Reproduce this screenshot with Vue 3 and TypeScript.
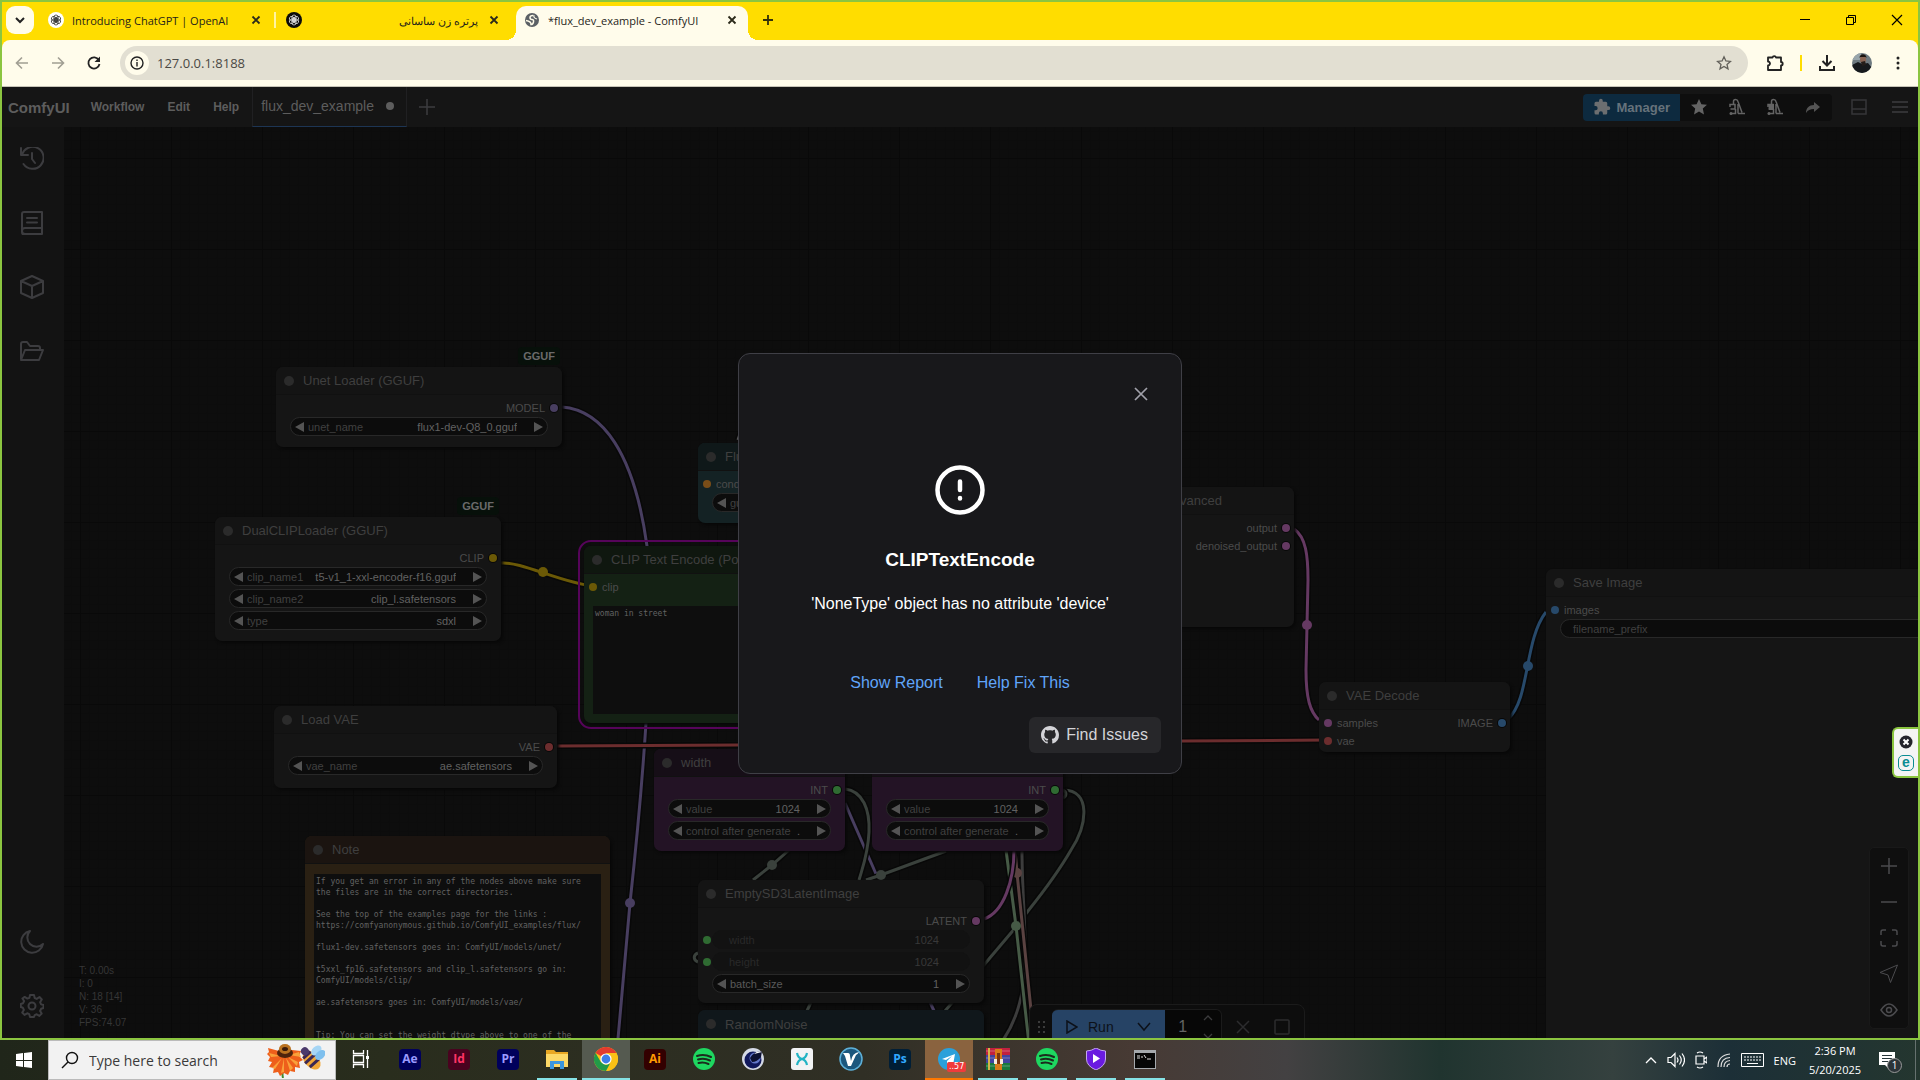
<script setup lang="ts">
import { ref } from 'vue'

interface Slot { name: string; color: string }
interface Widget { kind: 'combo' | 'text' | 'off'; label: string; value: string; bright?: boolean }
interface GraphNode {
  id: string
  x: number
  y: number
  w: number
  h: number
  title: string
  tone: string
  badge?: string
  selected?: boolean
  inputs?: Slot[]
  outputs?: Slot[]
  widgets?: Widget[]
  note?: string
}
interface Link { d: string; color: string; dot?: [number, number] }

const purple = '#483e60'
const yellow = '#6b5906'
const red = '#6c2d2e'
const pink = '#653962'
const blue = '#27496a'
const green = '#2f6b32'
const moss = '#3a413c'

const noteText = `If you get an error in any of the nodes above make sure
the files are in the correct directories.

See the top of the examples page for the links :
https://comfyanonymous.github.io/ComfyUI_examples/flux/

flux1-dev.safetensors goes in: ComfyUI/models/unet/

t5xxl_fp16.safetensors and clip_l.safetensors go in:
ComfyUI/models/clip/

ae.safetensors goes in: ComfyUI/models/vae/


Tip: You can set the weight dtype above to one of the
fp8 types if you have memory issues.`

const nodes = ref<GraphNode[]>([
  { id: 'unet', x: 276, y: 367, w: 286, h: 80, title: 'Unet Loader (GGUF)', tone: 'plain', badge: 'GGUF',
    outputs: [{ name: 'MODEL', color: purple }],
    widgets: [{ kind: 'combo', label: 'unet_name', value: 'flux1-dev-Q8_0.gguf' }] },
  { id: 'dual', x: 215, y: 517, w: 286, h: 124, title: 'DualCLIPLoader (GGUF)', tone: 'plain', badge: 'GGUF',
    outputs: [{ name: 'CLIP', color: yellow }],
    widgets: [
      { kind: 'combo', label: 'clip_name1', value: 't5-v1_1-xxl-encoder-f16.gguf' },
      { kind: 'combo', label: 'clip_name2', value: 'clip_l.safetensors' },
      { kind: 'combo', label: 'type', value: 'sdxl' },
    ] },
  { id: 'vae', x: 274, y: 706, w: 283, h: 82, title: 'Load VAE', tone: 'plain',
    outputs: [{ name: 'VAE', color: red }],
    widgets: [{ kind: 'combo', label: 'vae_name', value: 'ae.safetensors' }] },
  { id: 'flux', x: 698, y: 443, w: 286, h: 80, title: 'FluxGuidance', tone: 'teal',
    inputs: [{ name: 'conditioning', color: '#7a4d18' }],
    widgets: [{ kind: 'combo', label: 'guidance', value: '3.5' }] },
  { id: 'encode', x: 584, y: 546, w: 386, h: 177, title: 'CLIP Text Encode (Positive Prompt)', tone: 'green', selected: true,
    inputs: [{ name: 'clip', color: yellow }],
    note: 'woman in street' },
  { id: 'sampler', x: 1044, y: 487, w: 250, h: 140, title: 'SamplerCustomAdvanced', tone: 'plain',
    outputs: [{ name: 'output', color: pink }, { name: 'denoised_output', color: pink }] },
  { id: 'decode', x: 1319, y: 682, w: 191, h: 70, title: 'VAE Decode', tone: 'plain',
    inputs: [{ name: 'samples', color: pink }, { name: 'vae', color: red }],
    outputs: [{ name: 'IMAGE', color: blue }] },
  { id: 'save', x: 1546, y: 569, w: 560, h: 530, title: 'Save Image', tone: 'plain',
    inputs: [{ name: 'images', color: blue }],
    widgets: [{ kind: 'text', label: 'filename_prefix', value: '' }] },
  { id: 'note', x: 305, y: 836, w: 305, h: 300, title: 'Note', tone: 'brown', note: noteText },
  { id: 'width', x: 654, y: 749, w: 191, h: 102, title: 'width', tone: 'plum',
    outputs: [{ name: 'INT', color: green }],
    widgets: [
      { kind: 'combo', label: 'value', value: '1024' },
      { kind: 'combo', label: 'control after generate', value: '.' },
    ] },
  { id: 'height', x: 872, y: 749, w: 191, h: 102, title: 'height', tone: 'plum',
    outputs: [{ name: 'INT', color: green }],
    widgets: [
      { kind: 'combo', label: 'value', value: '1024' },
      { kind: 'combo', label: 'control after generate', value: '.' },
    ] },
  { id: 'latent', x: 698, y: 880, w: 286, h: 123, title: 'EmptySD3LatentImage', tone: 'plain',
    outputs: [{ name: 'LATENT', color: pink }],
    widgets: [
      { kind: 'off', label: 'width', value: '1024' },
      { kind: 'off', label: 'height', value: '1024' },
      { kind: 'combo', label: 'batch_size', value: '1', bright: true },
    ] },
  { id: 'noise', x: 698, y: 1010, w: 286, h: 100, title: 'RandomNoise', tone: 'navy' },
])

const links: Link[] = [
  { d: 'M562 407C602 410 634 452 647 546C655 610 650 670 646 723C643 770 638 830 630 903L617 1050', color: purple, dot: [630, 903] },
  { d: 'M501 563C520 561 562 583 593 586', color: yellow, dot: [543, 572] },
  { d: 'M557 746L738 745L1182 741L1328 740', color: red },
  { d: 'M1294 529C1306 537 1308 556 1308 580L1306 670C1306 698 1310 712 1319 720', color: pink, dot: [1307, 625] },
  { d: 'M1508 719C1530 700 1524 640 1546 612', color: blue, dot: [1528, 666] },
  { d: 'M845 803L876 874', color: purple },
  { d: 'M845 789C863 791 870 810 869 832C868 854 863 866 859 880', color: moss },
  { d: 'M789 850L772 865L753 880', color: moss, dot: [772, 865] },
  { d: 'M946 851L881 875L866 880', color: moss, dot: [881, 875] },
  { d: 'M1063 790C1092 790 1087 826 1071 850C1056 876 1040 896 1028 911L1016 927L945 1011', color: moss },
  { d: 'M1063 798C1067 796 1067 791 1062 790', color: moss },
  { d: 'M698 953C693 955 693 960 698 962', color: moss },
  { d: 'M812 1000L806 1013', color: moss },
  { d: 'M929 1000L935 1013', color: purple },
  { d: 'M1022 851C1022 900 1028 950 1024 980C1020 1012 1010 1030 1003 1040', color: '#3c3c3c' },
  { d: 'M1015 850L1017 873L1031 1010', color: '#5a4241', dot: [1017, 873] },
  { d: 'M1006 850L1016 926L1029 1044', color: '#465a46', dot: [1016, 926] },
  { d: 'M984 919C1004 912 1014 880 1014 850', color: pink },
  { d: 'M738 440L742 428', color: '#555' },
]

const tabs = [
  { title: 'Introducing ChatGPT | OpenAI', icon: 'light', rtl: false, active: false },
  { title: 'پرتره زن ساسانی', icon: 'dark', rtl: true, active: false },
  { title: '*flux_dev_example - ComfyUI', icon: 'globe', rtl: false, active: true },
]

const stats = ['T: 0.00s', 'I: 0', 'N: 18 [14]', 'V: 36', 'FPS:74.07']

const apps = [
  { id: 'ae', text: 'Ae', bg: '#00005b', fg: '#9a9aff' },
  { id: 'id', text: 'Id', bg: '#49021f', fg: '#ff3366' },
  { id: 'pr', text: 'Pr', bg: '#00005b', fg: '#9a9aff' },
  { id: 'explorer', open: true },
  { id: 'chrome', open: true, current: true },
  { id: 'ai', text: 'Ai', bg: '#330000', fg: '#ff9a00' },
  { id: 'spotify' },
  { id: 'cinema' },
  { id: 'xsplit' },
  { id: 'vivaldi' },
  { id: 'ps', text: 'Ps', bg: '#001e36', fg: '#31a8ff' },
  { id: 'telegram', alert: true },
  { id: 'rar', open: true },
  { id: 'spotify2', open: true },
  { id: 'shield', open: true },
  { id: 'cmd', open: true },
]

const address = ref('127.0.0.1:8188')
const batch = ref('1')
const dialogOpen = ref(true)
</script>

<template>
  <div class="desktop">
    <div class="browser">
      <div class="tabstrip">
        <button class="tab-search" aria-label="Search tabs">
          <svg width="10" height="10" viewBox="0 0 10 10"><path d="M1 3l4 4 4-4" fill="none" stroke="#222" stroke-width="2" /></svg>
        </button>
        <div v-for="t in tabs" :key="t.title" class="tab" :class="{ active: t.active, ruled: t.icon === 'light' }">
          <svg v-if="t.icon === 'globe'" width="16" height="16" viewBox="0 0 16 16">
            <circle cx="8" cy="8" r="7" fill="#5b6065" />
            <path d="M9 3.500Q6 3.500 6 5.500T8 7.500 9.500 10 7 12.500Q7.500 9.500 2 8.500" fill="none" stroke="#fffceb" stroke-width="1.500" />
            <path d="M10 3q-1 3 3 4" fill="none" stroke="#fffceb" stroke-width="1.200" />
          </svg>
          <svg v-else width="16" height="16" viewBox="0 0 16 16">
            <circle cx="8" cy="8" r="8" :fill="t.icon === 'light' ? '#fff' : '#0b0b0b'" />
            <g fill="none" :stroke="t.icon === 'light' ? '#333' : '#e4e4e4'" stroke-width="0.800">
              <rect v-for="a in 6" :key="a" x="6" y="3" width="4" height="6" rx="2" :transform="`rotate(${a * 60} 8 8)`" />
            </g>
          </svg>
          <span class="tab-title" :dir="t.rtl ? 'rtl' : 'ltr'">{{ t.title }}</span>
          <button class="bare" aria-label="Close tab">
            <svg width="16" height="16" viewBox="0 0 16 16"><path d="M4.500 4.500l7 7M11.500 4.500l-7 7" stroke="#2b2a1a" stroke-width="1.800" /></svg>
          </button>
        </div>
        <button class="bare new-tab" aria-label="New tab">
          <svg width="16" height="16" viewBox="0 0 16 16"><path d="M8 3v10M3 8h10" stroke="#333009" stroke-width="1.800" /></svg>
        </button>
        <div class="win-buttons">
          <button class="bare" aria-label="Minimize"><svg width="12" height="12"><path d="M1 5.500h10" stroke="#000" /></svg></button>
          <button class="bare" aria-label="Restore"><svg width="12" height="12"><path d="M1.500 3.500h7v7h-7zM3.500 3v-1.500h7v7H9" fill="none" stroke="#000" /></svg></button>
          <button class="bare" aria-label="Close"><svg width="12" height="12"><path d="M1 1l10 10M11 1L1 11" stroke="#000" stroke-width="1.200" /></svg></button>
        </div>
      </div>

      <div class="toolbar">
        <button class="bare nav" aria-label="Back"><svg width="16" height="16" viewBox="0 0 16 16"><path d="M14 8H3M8 2.500L2.500 8 8 13.500" fill="none" stroke="#a19f93" stroke-width="1.600" /></svg></button>
        <button class="bare nav" aria-label="Forward"><svg width="16" height="16" viewBox="0 0 16 16"><path d="M2 8h11M8 2.500L13.500 8 8 13.500" fill="none" stroke="#a19f93" stroke-width="1.600" /></svg></button>
        <button class="bare nav" aria-label="Reload"><svg width="16" height="16" viewBox="0 0 16 16"><path d="M12.800 5A5.600 5.600 0 1 0 13.500 9" fill="none" stroke="#222" stroke-width="1.800" /><path d="M14 1.500V7H8.500z" fill="#222" /></svg></button>
        <div class="omnibox">
          <button class="site-info" aria-label="Site information">
            <svg width="14" height="14" viewBox="0 0 14 14"><circle cx="7" cy="7" r="6" fill="none" stroke="#222" stroke-width="1.400" /><path d="M7 6v4.500M7 3.500V5" stroke="#222" stroke-width="1.400" /></svg>
          </button>
          <input v-model="address" class="address" aria-label="Address" />
          <button class="bare" aria-label="Bookmark">
            <svg width="16" height="16" viewBox="0 0 16 16"><path d="M8 1.800l1.900 4.200 4.500.4-3.400 3 1 4.500L8 11.500l-4 2.400 1-4.500-3.400-3 4.500-.4z" fill="none" stroke="#62605a" stroke-width="1.300" /></svg>
          </button>
        </div>
        <div class="tools">
          <button class="bare" aria-label="Extensions"><svg width="18" height="18" viewBox="0 0 18 18"><path d="M2 3.500h4.500a1.800 1.800 0 0 1 3.500 0H15v4.500a1.700 1.700 0 0 1 0 3.400V16H2v-4.500a2 2 0 0 0 0-4z" fill="none" stroke="#222" stroke-width="1.800" stroke-linejoin="round" /></svg></button>
          <i class="tool-rule"></i>
          <button class="bare" aria-label="Downloads"><svg width="18" height="18" viewBox="0 0 18 18"><path d="M9 1v10M4.500 7L9 11.500 13.500 7M2 12v4h14v-4" fill="none" stroke="#222" stroke-width="2" /></svg></button>
          <button class="bare" aria-label="Profile">
            <svg width="20" height="20" viewBox="0 0 20 20">
              <clipPath id="face"><circle cx="10" cy="10" r="10" /></clipPath>
              <g clip-path="url(#face)"><rect width="20" height="20" fill="#6e7a80" /><path d="M0 0h9v7H0z" fill="#98a5ab" /><path d="M0 20V12l6-3 4 2 6-1 4 5v5z" fill="#16191c" /><ellipse cx="11" cy="6.500" rx="3" ry="4" fill="#8a6554" /><path d="M7.500 5c0-5 7-5 7 0l-1-1h-5z" fill="#191411" /><path d="M9 9l4-1 1 4-4 1z" fill="#241d1a" /></g>
            </svg>
          </button>
          <button class="bare" aria-label="Menu"><svg width="4" height="16" viewBox="0 0 4 16" fill="#222"><circle cx="2" cy="3" r="1.500" /><circle cx="2" cy="8" r="1.500" /><circle cx="2" cy="13" r="1.500" /></svg></button>
        </div>
      </div>

      <div class="app">
        <header class="menubar">
          <strong class="brand">ComfyUI</strong>
          <button class="bare menu-item">Workflow</button>
          <button class="bare menu-item">Edit</button>
          <button class="bare menu-item">Help</button>
          <button class="bare workflow-tab">flux_dev_example<i class="unsaved"></i></button>
          <button class="bare add-flow" aria-label="New workflow"><svg width="16" height="16"><path d="M8 0v16M0 8h16" stroke="#3c3c3f" stroke-width="1.500" /></svg></button>
          <div class="actions">
            <button class="manager">
              <svg width="18" height="18" viewBox="0 0 24 24" fill="#6c6e70"><path d="M20.500 11H19V7a2 2 0 0 0-2-2h-4V3.500a2.500 2.500 0 0 0-5 0V5H4a2 2 0 0 0-2 2v3.800h1.500a2.700 2.700 0 0 1 0 5.400H2V20a2 2 0 0 0 2 2h3.800v-1.500a2.700 2.700 0 0 1 5.400 0V22H17a2 2 0 0 0 2-2v-4h1.500a2.500 2.500 0 0 0 0-5z" /></svg>
              Manager
            </button>
            <div class="action-icons">
              <button class="bare" aria-label="Favorites"><svg width="18" height="18" viewBox="0 0 18 18"><path d="M9 1l2.400 5.200 5.600.6-4.200 3.800L14 16.500 9 13.500l-5 3 1.200-5.900L1 6.800l5.600-.6z" fill="#646464" /></svg></button>
              <button v-for="k in 2" :key="k" class="bare" aria-label="Unload models"><svg width="18" height="18" viewBox="0 0 18 18"><path d="M2 9V6.500h5V11H2.500M5.500 6V3.500Q5.500 1.500 7.500 1.500T10 3.500L14 14.500M2 15.500h5.500V11M10 6v9.500M10 15.500h7" fill="none" stroke="#646464" stroke-width="1.500" /><circle cx="3" cy="15.500" r="1.500" fill="#646464" /><path v-if="k === 2" d="M2 6h6v6H3z" fill="#646464" /></svg></button>
              <button class="bare" aria-label="Share"><svg width="18" height="18" viewBox="0 0 18 18"><path d="M10 4l6 5-6 5v-3c-4 0-6 1-8 4 0-5 3-8 8-8z" fill="#545454" /></svg></button>
            </div>
            <button class="bare panel-btn" aria-label="Toggle bottom panel"><svg width="16" height="16"><path d="M1 1h14v14H1zM1 10h14" fill="none" stroke="#363638" stroke-width="1.500" /></svg></button>
            <button class="bare" aria-label="Toggle menu"><svg width="16" height="14"><path d="M0 2h16M0 7h16M0 12h16" stroke="#3c3c3f" stroke-width="1.500" /></svg></button>
          </div>
        </header>

        <div class="workspace">
          <nav class="sidebar">
            <button class="bare side" aria-label="Queue"><svg width="24" height="24" viewBox="0 0 24 24"><path d="M1 1v7h7M2 8a11 11 0 1 1 1.500 9M12 6v6l3 4" /></svg></button>
            <button class="bare side" aria-label="Node library"><svg width="24" height="24" viewBox="0 0 24 24"><path d="M22 1H4Q2 1 2 3v18q0 3 3 3M22 1v16H5q-3 0-3 3 0 3 3 3h17v-6M7 7h10M7 11.500h10" /></svg></button>
            <button class="bare side" aria-label="Models"><svg width="24" height="24" viewBox="0 0 24 24"><path d="M12 1l11 5v12l-11 5-11-5V6zM1 6l11 5 11-5M12 11v12" /></svg></button>
            <button class="bare side" aria-label="Workflows"><svg width="24" height="24" viewBox="0 0 24 24"><path d="M1 20V5q0-2 2-2h4l3 4h8q2 0 2 2v2M1 21L5 11h18l-4 10z" /></svg></button>
            <span class="side-gap"></span>
            <button class="bare side" aria-label="Theme"><svg width="24" height="24" viewBox="0 0 24 24"><path d="M10 1a11 11 0 1 0 13 13A9 9 0 0 1 10 1z" /></svg></button>
            <button class="bare side" aria-label="Settings"><svg width="24" height="24" viewBox="0 0 24 24"><circle cx="12" cy="12" r="3.500" /><path d="M10 1h4l.7 3 2 .9L19.500 3l2.300 2.500-1.700 2.700 1 2.200 2.400.6v3l-2.400.8-1 2.200 1.600 2.500-2.300 2.400-2.700-1.600-2 .8L14 23h-4l-.8-2.900-2-.8-2.700 1.600L2.200 18.500 3.900 16l-1-2.200L.8 13v-3l2.300-.8 1-2.200L2.400 4.500 4.700 2.900l2.700 1.700 2-.7z" /></svg></button>
          </nav>

          <main class="stage">
            <div class="graph">
              <svg class="links" width="1920" height="1080">
                <defs>
                  <pattern id="grid" x="80" y="67" width="91" height="91" patternUnits="userSpaceOnUse">
                    <path v-for="m in [9, 18, 27, 36, 46, 55, 64, 73, 82]" :key="m" :d="`M${m} 0v91M0 ${m}h91`" stroke="#0c0c0c" stroke-width="1" />
                    <path d="M0 0v91M0 0h91" stroke="#090909" stroke-width="2" />
                  </pattern>
                </defs>
                <rect width="1920" height="1080" fill="url(#grid)" />
                <g v-for="(l, i) in links" :key="i" fill="none">
                  <path :d="l.d" stroke="#080808" stroke-width="6" />
                  <path :d="l.d" :stroke="l.color" stroke-width="3" />
                  <circle v-if="l.dot" :cx="l.dot[0]" :cy="l.dot[1]" r="5" :fill="l.color" />
                </g>
              </svg>

              <section
                v-for="n in nodes" :key="n.id" class="node" :class="[n.tone, { selected: n.selected }]"
                :style="{ left: n.x + 'px', top: n.y + 'px', width: n.w + 'px', height: n.h + 'px' }"
              >
                <span v-if="n.badge" class="badge">{{ n.badge }}</span>
                <h3 class="node-title">{{ n.title }}</h3>
                <div v-if="n.inputs || n.outputs" class="slots">
                  <ul>
                    <li v-for="s in n.inputs" :key="s.name"><i class="port" :style="{ background: s.color }"></i>{{ s.name }}</li>
                  </ul>
                  <ul class="outs">
                    <li v-for="s in n.outputs" :key="s.name">{{ s.name }}<i class="port ringed" :style="{ background: s.color }"></i></li>
                  </ul>
                </div>
                <div v-if="n.widgets" class="widgets">
                  <div v-for="w in n.widgets" :key="w.label" class="widget" :class="[w.kind, { bright: w.bright }]">
                    <i v-if="w.kind === 'off'" class="port pin"></i>
                    <button v-if="w.kind === 'combo'" class="bare arrow" aria-label="Previous"><svg width="9" height="10"><path d="M9 0v10L0 5z" /></svg></button>
                    <label :for="n.id + w.label">{{ w.label }}</label>
                    <input :id="n.id + w.label" v-model="w.value" :disabled="w.kind === 'off'" />
                    <button v-if="w.kind === 'combo'" class="bare arrow" aria-label="Next"><svg width="9" height="10"><path d="M0 0v10l9-5z" /></svg></button>
                  </div>
                </div>
                <textarea v-if="n.note" v-model="n.note" class="note-text" spellcheck="false" :aria-label="n.title"></textarea>
              </section>
            </div>

            <ul class="stats"><li v-for="s in stats" :key="s">{{ s }}</li></ul>

            <div class="runbar">
              <svg width="8" height="14" fill="#3b3b3b"><rect v-for="g in 6" :key="g" :x="g % 2 ? 0 : 5" :y="Math.floor((g - 1) / 2) * 5 + 1" width="2" height="2" /></svg>
              <div class="run-group">
                <button class="run"><svg width="12" height="14"><path d="M1 1v12l10-6z" fill="none" stroke="#0c1119" stroke-width="1.500" /></svg>Run</button>
                <button class="run-more" aria-label="Run options"><svg width="14" height="10"><path d="M1 1l6 7 6-7" fill="none" stroke="#0c1119" stroke-width="1.500" /></svg></button>
                <input v-model="batch" class="batch" aria-label="Batch count" />
                <span class="steps">
                  <button class="bare" aria-label="Increase"><svg width="10" height="8"><path d="M1 6l4-4 4 4" fill="none" stroke="#3b3b3d" stroke-width="1.300" /></svg></button>
                  <button class="bare" aria-label="Decrease"><svg width="10" height="8"><path d="M1 2l4 4 4-4" fill="none" stroke="#3b3b3d" stroke-width="1.300" /></svg></button>
                </span>
              </div>
              <button class="bare cancel" aria-label="Cancel"><svg width="14" height="14"><path d="M1 1l12 12M13 1L1 13" stroke="#2c2c2e" stroke-width="1.500" /></svg></button>
              <button class="bare stop" aria-label="Stop"><svg width="16" height="16"><rect x="1" y="1" width="14" height="14" rx="1" fill="none" stroke="#2c2c2e" stroke-width="1.500" /></svg></button>
            </div>

            <div class="zoom-tools">
              <button class="bare" aria-label="Zoom in"><svg width="18" height="18" viewBox="0 0 18 18"><path d="M9 1v16M1 9h16" /></svg></button>
              <button class="bare" aria-label="Zoom out"><svg width="18" height="18" viewBox="0 0 18 18"><path d="M1 9h16" /></svg></button>
              <button class="bare" aria-label="Fit view"><svg width="18" height="18" viewBox="0 0 18 18"><path d="M1 6V3q0-2 2-2h3M12 1h3q2 0 2 2v3M17 12v3q0 2-2 2h-3M6 17H3q-2 0-2-2v-3" /></svg></button>
              <button class="bare" aria-label="Select mode"><svg width="20" height="20" viewBox="0 0 20 20"><path d="M18.500 1L1 8.500l8 2.500 2.500 7.500z" stroke-width="1" /></svg></button>
              <button class="bare" aria-label="Toggle links"><svg width="18" height="18" viewBox="0 0 18 18"><path d="M1 9q8-12 16 0-8 12-16 0z" /><circle cx="9" cy="9" r="2.500" /></svg></button>
            </div>
          </main>
        </div>

        <div v-if="dialogOpen" class="mask">
          <div class="dialog" role="dialog" aria-modal="true" aria-labelledby="dlg-title">
            <div class="dialog-head">
              <button class="bare dialog-close" aria-label="Close" @click="dialogOpen = false"><svg width="14" height="14"><path d="M1 1l12 12M13 1L1 13" stroke="#a1a1aa" stroke-width="1.700" /></svg></button>
            </div>
            <div class="dialog-body">
              <svg width="50" height="50" viewBox="0 0 50 50"><circle cx="25" cy="25" r="22.500" fill="none" stroke="#fff" stroke-width="4.500" /><path d="M25 16.500v8.500M25 33v.5" stroke="#fff" stroke-width="4.500" stroke-linecap="round" /></svg>
              <h2 id="dlg-title">CLIPTextEncode</h2>
              <p>'NoneType' object has no attribute 'device'</p>
            </div>
            <div class="dialog-links">
              <button class="bare">Show Report</button>
              <button class="bare">Help Fix This</button>
            </div>
            <div class="dialog-foot">
              <button class="issues">
                <svg width="18" height="18" viewBox="0 0 16 16" fill="#d4d4d8"><path d="M8 0C3.580 0 0 3.580 0 8c0 3.540 2.290 6.530 5.470 7.590.4.070.55-.17.55-.38 0-.19-.010-.82-.010-1.490-2.010.37-2.530-.49-2.690-.94-.090-.23-.48-.94-.82-1.130-.28-.15-.68-.52-.010-.53.63-.010 1.080.58 1.230.82.72 1.210 1.870.87 2.330.66.070-.52.28-.87.51-1.070-1.780-.2-3.640-.89-3.640-3.950 0-.87.31-1.590.82-2.150-.080-.2-.36-1.020.080-2.120 0 0 .67-.21 2.200.82.64-.18 1.320-.27 2-.27s1.360.090 2 .27c1.530-1.040 2.200-.82 2.200-.82.44 1.100.16 1.920.080 2.120.51.56.82 1.270.82 2.150 0 3.070-1.870 3.750-3.650 3.950.29.25.54.73.54 1.480 0 1.070-.010 1.930-.010 2.200 0 .21.15.46.55.38A8.010 8.010 0 0 0 16 8c0-4.420-3.580-8-8-8z" /></svg>
                Find Issues
              </button>
            </div>
          </div>
        </div>

        <div class="eset">
          <svg width="14" height="14" viewBox="0 0 14 14"><circle cx="7" cy="7" r="6.500" fill="#24242c" /><path d="M4.500 4.500l5 5M9.500 4.500l-5 5" stroke="#fff" stroke-width="2" /></svg>
          <span class="eset-mark">e</span>
        </div>
      </div>
    </div>

    <footer class="taskbar">
      <button class="bare start" aria-label="Start"><svg width="16" height="16" fill="#fff"><path d="M0 2l7-1v7H0zM8 1l8-1v8H8zM0 9h7v6l-7-1zM8 9h8v7l-8-1z" /></svg></button>
      <div class="search">
        <svg width="18" height="18" viewBox="0 0 18 18"><circle cx="11" cy="7" r="5.500" fill="none" stroke="#111" stroke-width="1.400" /><path d="M7 11l-6 6" stroke="#111" stroke-width="1.400" /></svg>
        <input value="Type here to search" aria-label="Search" />
        <svg width="58" height="36" viewBox="0 0 58 36">
          <path d="M16 28q-1 4 0 8" stroke="#3f8b2d" stroke-width="2" fill="none" />
          <path d="M12 9L1 6l1 4-2 2 3 3-2 4 4 1-3 5 5 1-1 5 5-1 2 4 4-3 4 2 2-4 5 1 0-5 5 1-1-6 4-2-4-4 2-5-9-1z" fill="#ee5f1b" />
          <path d="M14 14L2 11l2 4zM15 16L5 26l3 1zM17 16l-3 15 3-1zM19 16l4 13 3-3zM21 15l9 9 1-4zM22 13l12 2-2-5z" fill="#f9a13a" />
          <ellipse cx="18" cy="11" rx="8" ry="5" fill="#4e230c" /><ellipse cx="18" cy="7" rx="6" ry="5" fill="#b9711f" /><ellipse cx="18" cy="7" rx="3" ry="2" fill="#3a1a0a" />
          <g transform="rotate(48 44 16)"><ellipse cx="46" cy="17" rx="11" ry="7" fill="#f2a838" /><path d="M39 12v10M44 10v14M50 11v12" stroke="#3b2854" stroke-width="3" /><circle cx="35" cy="16" r="4" fill="#4b3a6b" /><ellipse cx="42" cy="7" rx="4" ry="6" fill="#a6d6f5" /><ellipse cx="48" cy="7" rx="4" ry="6" fill="#7fc0ee" /></g>
        </svg>
      </div>
      <button class="bare task" aria-label="Task view"><svg width="18" height="18" viewBox="0 0 18 18"><path d="M1.500 0v3.500h10V0M1.500 18v-3.500h10V18M1.500 5.500h10v7h-10zM15.500 0v18" fill="none" stroke="#fff" stroke-width="1.300" /><path d="M14 6h3v3h-3z" fill="#fff" /></svg></button>
      <button v-for="a in apps" :key="a.id" class="bare task" :class="{ open: a.open, current: a.current, alert: a.alert }" :aria-label="a.id">
        <span v-if="a.text" class="tile" :style="{ background: a.bg, color: a.fg }">{{ a.text }}</span>
        <svg v-else-if="a.id === 'explorer'" width="22" height="20" viewBox="0 0 22 20"><path d="M0 1h8l2 2h12v15H0z" fill="#e8a723" /><path d="M0 5h22v13H0z" fill="#fcd867" /><path d="M4 20v-8h14v8h-4v-5H8v5z" fill="#3b96dd" /></svg>
        <svg v-else-if="a.id === 'chrome'" width="24" height="24" viewBox="0 0 24 24"><circle cx="12" cy="12" r="12" fill="#fbc116" /><path d="M12 12L1.600 6A12 12 0 0 1 22.400 6z" fill="#e33b2e" /><path d="M12 6h10.400A12 12 0 0 1 12 24l5-9z" fill="#fbc116" /><path d="M12 24A12 12 0 0 1 1.600 6l5.200 9 5 3 .2 0 4-1.500z" fill="#229a48" /><circle cx="12" cy="12" r="5.600" fill="#fff" /><circle cx="12" cy="12" r="4.400" fill="#3f7de8" /></svg>
        <svg v-else-if="a.id.startsWith('spotify')" width="22" height="22" viewBox="0 0 22 22"><circle cx="11" cy="11" r="11" fill="#1ed760" /><path d="M4 8q7-2.500 14 1M5 11.500q6-2 12 1M5.500 15q5-1.500 10 1" fill="none" stroke="#1b2b1d" stroke-width="2" stroke-linecap="round" /></svg>
        <svg v-else-if="a.id === 'cinema'" width="22" height="22" viewBox="0 0 22 22"><circle cx="11" cy="11" r="11" fill="#d4d9e6" /><circle cx="11" cy="12" r="8.500" fill="#10185c" /><circle cx="13" cy="10" r="5.500" fill="#6377c8" /><path d="M8 10q4-7 12-7l-1 6q-4 5-9 5z" fill="#0c1030" /><path d="M12 6q4-4 8-2-4 1-8 2z" fill="#fff" /></svg>
        <svg v-else-if="a.id === 'xsplit'" width="22" height="22" viewBox="0 0 22 22"><rect width="22" height="22" rx="3" fill="#f2f3f4" /><path d="M6 5q1 5 5 6-4 1-5 6M16 5q-1 5-5 6 4 1 5 6" fill="none" stroke="#21b3c4" stroke-width="2.200" /></svg>
        <svg v-else-if="a.id === 'vivaldi'" width="24" height="24" viewBox="0 0 24 24"><circle cx="12" cy="12" r="11" fill="#1c577d" stroke="#5db0d8" stroke-width="1.500" /><path d="M4 6h5q2 0 2 3l1 5q1-8 8-9-1 2-3 3l-5 11H9L6 9z" fill="#fff" /></svg>
        <span v-else-if="a.id === 'telegram'" class="telegram">
          <svg width="22" height="22" viewBox="0 0 22 22"><circle cx="11" cy="11" r="11" fill="#2ba0da" /><path d="M4 11l13-5-2 11-4-3-2 2v-3l5-5-6 4z" fill="#fff" /></svg>
          <b>..57</b>
        </span>
        <svg v-else-if="a.id === 'rar'" width="24" height="22" viewBox="0 0 24 22"><path d="M0 0h24v7H0z" fill="#c2213f" /><path d="M0 7h24v8H0z" fill="#4144a0" /><path d="M0 15h24v7H0z" fill="#187a3d" /><path d="M0 3h24M0 10h24M0 18h24" stroke="#e8e2ea" stroke-opacity="0.350" stroke-width="1" /><path d="M2 0h2v22H2z" fill="#d6b44a" /><path d="M9 1h7v21H9z" fill="#d97b18" /><path d="M8 11h9v5H8z" fill="#f5ecdc" /><path d="M11 5h3v11h-3z" fill="#7b3410" /></svg>
        <svg v-else-if="a.id === 'shield'" width="20" height="22" viewBox="0 0 20 22"><path d="M10 0q5 3 9.500 3v8q0 7-9.500 11Q.5 18 .5 11V3Q5 3 10 0z" fill="#6a1be0" stroke="#c4a6ee" /><path d="M7 6v9l7-4.500z" fill="#fff" /></svg>
        <svg v-else width="22" height="19" viewBox="0 0 22 19"><path d="M0 0h22v19H0z" fill="#a5a9ad" /><path d="M1 3h20v15H1z" fill="#060606" /><path d="M3 6h3M3 8h3M8 6v2M10 5l2 3M13 9h4" stroke="#ddd" /></svg>
      </button>
      <div class="tray">
        <svg width="12" height="8"><path d="M1 7l5-5 5 5" fill="none" stroke="#fff" stroke-width="1.300" /></svg>
        <svg width="18" height="16" viewBox="0 0 18 16"><path d="M1 5.500h3l4-4v13l-4-4H1zM10 5.500q2 2.500 0 5M12.500 3.500q3.500 4.500 0 9M15 1.500q5 6.500 0 13" fill="none" stroke="#fff" stroke-width="1.200" /></svg>
        <svg width="12" height="18" viewBox="0 0 12 18"><path d="M1 5h8v8H1zM9 8l3-2v6l-3-2M2 2q3-2 6 0M2 16q3 2 6 0" fill="none" stroke="#fff" stroke-width="1.200" /></svg>
        <svg width="14" height="14" viewBox="0 0 14 14"><path d="M1 14Q1 2 13 1M4 14Q4 5 13 4.500M7 14Q7 8 13 7.500M10 14q0-3 3-3" fill="none" stroke="#ddd" stroke-width="1.200" /></svg>
        <svg width="23" height="14" viewBox="0 0 23 14"><path d="M.5.500h22v13H.5z" fill="none" stroke="#fff" /><path d="M3 4h17M3 7h17" stroke="#fff" stroke-dasharray="2 1" /><path d="M6 10.500h11" stroke="#fff" /></svg>
        <span class="lang">ENG</span>
        <div class="clock"><span>2:36 PM</span><span>5/20/2025</span></div>
        <div class="notify">
          <svg width="16" height="18" viewBox="0 0 16 18"><path d="M0 1h16v13h-6v4l-4-4H0z" fill="#fff" /><path d="M3 4.500h10M3 7.500h10M3 10.500h6" stroke="#26363a" stroke-width="1.200" /></svg>
          <b>1</b>
        </div>
        <i class="peek"></i>
      </div>
    </footer>
  </div>
</template>

<style>
html, body { margin: 0; background: #0d0d0d; }
</style>

<style scoped>
* { box-sizing: border-box; }
.desktop { display: flex; flex-direction: column; height: 100vh; min-height: 800px; font-family: "Liberation Sans", Arial, sans-serif; overflow: hidden; }
.bare { display: inline-flex; align-items: center; justify-content: center; padding: 0; border: 0; background: none; color: inherit; font: inherit; }
svg { display: block; flex: none; }
ul { margin: 0; padding: 0; list-style: none; }
input, textarea { border: 0; outline: 0; padding: 0; margin: 0; background: none; }
button { cursor: pointer; }

.browser { flex: 1; min-height: 0; display: flex; flex-direction: column; border: 2px solid #8bc540; background: #fd0; }

.tabstrip { display: flex; align-items: flex-start; gap: 6px; height: 38px; padding: 4px 0 0 4px; font: 11px "Open Sans", "Noto Sans", sans-serif; color: #26241a; }
.tab-search { display: flex; align-items: center; justify-content: center; width: 28px; height: 28px; padding: 0; border: 0; border-radius: 9px; background: #fffceb; }
.tab { position: relative; display: flex; align-items: center; gap: 8px; width: 232px; height: 28px; padding: 0 8px; }
.tab.ruled::after { content: ''; position: absolute; right: -4px; top: 6px; width: 2px; height: 16px; background: #fff3a0; }
.tab.active { height: 34px; padding-bottom: 6px; border-radius: 10px 10px 0 0; background: #fffceb; }
.tab.active::before, .tab.active::after { content: ''; position: absolute; bottom: 0; width: 10px; height: 10px; }
.tab.active::before { left: -10px; background: radial-gradient(circle at 0 0, transparent 10px, #fffceb 10px); }
.tab.active::after { right: -10px; background: radial-gradient(circle at 100% 0, transparent 10px, #fffceb 10px); }
.tab-title { flex: 1; overflow: hidden; white-space: nowrap; }
.new-tab { width: 28px; height: 28px; }
.win-buttons { display: flex; margin: 0 -2px 0 auto; }
.win-buttons .bare { width: 46px; height: 28px; }

.toolbar { display: flex; align-items: center; height: 47px; padding: 0 18px 1px 2px; border-bottom: 1px solid #c6c3b6; border-radius: 8px 8px 0 0; background: #fffceb; }
.nav { width: 36px; height: 36px; }
.omnibox { flex: 1; display: flex; align-items: center; gap: 8px; height: 34px; margin-left: 8px; padding: 0 16px 0 5px; border-radius: 17px; background: #e2dfd2; }
.site-info { display: flex; align-items: center; justify-content: center; width: 24px; height: 24px; padding: 0; border: 0; border-radius: 50%; background: #fffceb; }
.address { flex: 1; min-width: 0; font: 13px "Open Sans", "Noto Sans", sans-serif; color: #4a4944; }
.tools { display: flex; align-items: center; gap: 16px; margin-left: 18px; }
.tool-rule { width: 2px; height: 16px; background: #fd0; }
.tools .bare:last-child { margin-left: 8px; }

.app { position: relative; flex: 1; min-height: 0; display: flex; flex-direction: column; background: #0d0d0d; color: #5d5d5d; }
.menubar { display: flex; align-items: center; height: 40px; background: #151515; padding: 0 10px 0 6px; font-weight: 700; font-size: 12px; }
.brand { font-size: 15px; margin-right: 10px; }
.menu-item { padding: 0 12px 0 11px; height: 40px; }
.workflow-tab { gap: 12px; height: 40px; margin-left: 1px; padding: 0 12px 2px 8px; border: 1px solid #202022; border-width: 0 1px 1px; border-bottom-color: #1d3554; font-weight: 400; font-size: 14px; }
.unsaved { width: 8px; height: 8px; border-radius: 50%; background: #5d5d5d; }
.add-flow { margin-left: 12px; }
.actions { display: flex; align-items: center; margin-left: auto; }
.manager { display: flex; align-items: center; gap: 6px; height: 27px; padding: 0 10px; border: 0; border-radius: 4px 0 0 4px; background: #0d2a3f; color: #66727b; font: 700 13px "Liberation Sans", Arial, sans-serif; }
.action-icons { display: flex; align-items: center; gap: 20px; height: 27px; padding: 0 10px; border-radius: 0 4px 4px 0; background: #0e0e0e; }
.panel-btn { margin: 0 25px 0 19px; }

.workspace { flex: 1; min-height: 0; display: flex; }
.sidebar { display: flex; flex-direction: column; width: 62px; background: #131313; }
.side { width: 60px; height: 64px; }
.side svg { fill: none; stroke: #3c3c3f; stroke-width: 2; stroke-linejoin: round; stroke-linecap: round; }
.side-gap { flex: 1; }

.stage { position: relative; flex: 1; min-width: 0; overflow: hidden; background: #0d0d0d; }
.graph { position: absolute; left: -64px; top: -127px; }
.links { position: absolute; left: 0; top: 0; }
.node { position: absolute; display: flex; flex-direction: column; border-radius: 7px; background: #151515; box-shadow: 2px 2px 3px #080808; font-size: 11px; color: #434343; }
.node-title { display: flex; align-items: center; gap: 9px; height: 28px; margin: 0; padding: 0 0 0 8px; border-bottom: 1px solid #111; border-radius: 7px 7px 0 0; background: #141414; font-weight: 400; font-size: 13px; color: #3f3f3f; white-space: nowrap; flex: none; }
.node-title::before { content: ''; width: 10px; height: 10px; border-radius: 50%; background: #2b2b2b; }
.green { background: #142114; } .green .node-title { background: #0f170f; }
.teal { background: #142224; } .teal .node-title { background: #0f1819; }
.brown { background: #2a2013; } .brown .node-title { background: #1b1410; }
.plum { background: #231325; } .plum .node-title { background: #160e17; }
.navy .node-title { background: #10171b; border-bottom: 0; }
.navy { background: #10171b; }
.selected { outline: 2px solid #56045a; outline-offset: 4px; }
.badge { position: absolute; right: 2px; top: -20px; height: 18px; padding: 0 5px; border-radius: 4px; background: #07100a; color: #6a6a6a; font-weight: 700; line-height: 18px; }
.slots { display: flex; justify-content: space-between; padding: 4px 4px 0 5px; }
.slots li { display: flex; align-items: center; gap: 5px; height: 18px; color: #4b4b4b; }
.outs li { justify-content: flex-end; }
.port { flex: none; width: 8px; height: 8px; border-radius: 50%; }
.ringed { box-shadow: 0 0 0 1px #080808; }
.widgets { display: flex; flex-direction: column; gap: 3px; padding: 0 14px; }
.widget { position: relative; display: flex; align-items: center; gap: 4px; height: 19px; padding: 0 4px; border: 1px solid #282828; border-radius: 10px; background: #0c0c0c; }
.widget label { color: #404040; white-space: nowrap; }
.widget input { flex: 1; width: 0; min-width: 0; margin-right: 13px; text-align: right; color: #616161; font: 11px "Liberation Sans", Arial, sans-serif; }
.arrow svg { fill: #545454; }
.bright label { color: #5a5a5a; }
.text { padding-left: 12px; }
.off { border-color: #121212; background: #121212; padding-left: 16px; padding-right: 17px; }
.off label { color: #292929; }
.off input { color: #383838; }
.pin { position: absolute; left: -10px; top: 5px; background: #2f6b32; }
.note-text { flex: 1; margin: 10px 9px 9px; padding: 2px; background: #0e0e0e; color: #626262; font: 8px/11px "DejaVu Sans Mono", monospace; resize: none; overflow: hidden; }

.stats { position: absolute; left: 15px; bottom: 9px; font-size: 10px; line-height: 13px; color: #363636; }
.runbar { position: absolute; left: 50%; bottom: -12px; display: flex; align-items: center; width: 276px; height: 46px; margin-left: 38px; padding-left: 8px; border: 1px solid #1b1b1b; border-radius: 8px; background: #0d0d0d; }
.run-group { display: flex; flex: none; height: 36px; margin-left: 6px; border: 1px solid #1b1b1b; border-left: 0; border-radius: 6px; overflow: hidden; background: #070707; }
.cancel { margin-left: 14px; }
.stop { margin-left: 24px; }
.run, .run-more { display: flex; align-items: center; gap: 10px; padding: 0 14px; border: 0; background: #264365; color: #0c1119; font: 14px "Liberation Sans", Arial, sans-serif; }
.run { padding-right: 9px; }
.batch { width: 36px; color: #636363; font: 16px "Liberation Sans", Arial, sans-serif; text-align: center; }
.steps { display: flex; flex-direction: column; justify-content: space-between; padding: 4px 8px 4px 2px; }
.zoom-tools { position: absolute; right: 9px; bottom: 9px; display: flex; flex-direction: column; width: 40px; border: 1px solid #191919; border-radius: 5px; background: #0f0f0f; }
.zoom-tools .bare { height: 36px; }
.zoom-tools svg { fill: none; stroke: #4b4b4e; stroke-width: 1.5; }

.mask { position: absolute; inset: 0; display: flex; align-items: center; justify-content: center; padding-top: 2px; }
.dialog { width: 444px; border: 1px solid #3f3f46; border-radius: 12px; background: #18181b; color: #fff; font-size: 16px; }
.dialog-head { display: flex; justify-content: flex-end; padding: 20px; }
.dialog-close { width: 40px; height: 40px; }
.dialog-body { display: flex; flex-direction: column; align-items: center; padding-top: 31px; }
.dialog h2 { margin: 34px 0 0; font-size: 19px; line-height: 22px; }
.dialog p { margin: 24px 0 0; line-height: 18px; }
.dialog-links { display: flex; justify-content: center; gap: 34px; padding-top: 61px; line-height: 18px; color: #60a5fa; }
.dialog-foot { display: flex; justify-content: flex-end; padding: 25px 20px 20px; }
.issues { display: flex; align-items: center; gap: 7px; height: 36px; padding: 0 13px 0 12px; border: 0; border-radius: 6px; background: #27272a; color: #d4d4d8; font: 16px "Liberation Sans", Arial, sans-serif; }

.eset { position: absolute; right: 0; top: 640px; display: flex; flex-direction: column; align-items: center; justify-content: center; gap: 6px; width: 26px; height: 51px; border: 2px solid #8bc540; border-right: 0; border-radius: 6px 0 0 6px; background: #f4f4f4; }
.eset-mark { width: 16px; height: 16px; border: 1px solid #0a8c93; border-radius: 5px; color: #0a8c93; font: 700 14px/12px "Liberation Sans", Arial, sans-serif; text-align: center; }

.taskbar { display: flex; align-items: stretch; height: 40px; flex: none; color: #fff; background: linear-gradient(90deg, #20261a, #292d1d 20%, #302f25 45%, #473a34 59%, #434142 67%, #20342f 75%, #35413f 84%, #1c2f37 90%, #24362f); }
.start { width: 48px; }
.search { display: flex; align-items: center; gap: 10px; width: 288px; margin-right: 1px; padding: 0 10px 0 12px; border: 1px solid #bbb; background: #f2f2f2; }
.search input { flex: 1; min-width: 0; color: #3a3a3a; font: 14px "Open Sans", "Noto Sans", sans-serif; }
.task { position: relative; width: 48px; margin-right: 1px; border-bottom: 2px solid transparent; }
.task.open::after { content: ''; position: absolute; left: 4px; right: 4px; bottom: -2px; height: 2px; background: #86e3e6; }
.task.current { background: #555a50; }
.task.current::after { left: 0; right: 0; }
.task.alert { background: #8a633f; border-bottom-color: #ff7800; }
.tile { width: 22px; height: 21px; border-radius: 4px; font: 700 12px/20px "Open Sans", "Noto Sans", sans-serif; text-align: center; }
.telegram { position: relative; }
.telegram b { position: absolute; left: 9px; top: 14px; padding: 0 2px; border-radius: 2px; background: #ef3b3b; font: 8px/10px "DejaVu Sans", sans-serif; }
.tray { display: flex; align-items: center; gap: 10px; margin-left: auto; padding-right: 4px; font: 11px/19px "Open Sans", "Noto Sans", sans-serif; }
.clock { display: flex; flex-direction: column; align-items: center; width: 58px; }
.notify { position: relative; margin: 0 10px 0 5px; }
.notify b { position: absolute; left: 8px; top: 7px; width: 15px; height: 15px; border: 1px solid #999; border-radius: 50%; background: #2c3438; font: 10px/13px "Open Sans", sans-serif; text-align: center; }
.peek { align-self: stretch; width: 1px; background: #66716f; }
</style>
